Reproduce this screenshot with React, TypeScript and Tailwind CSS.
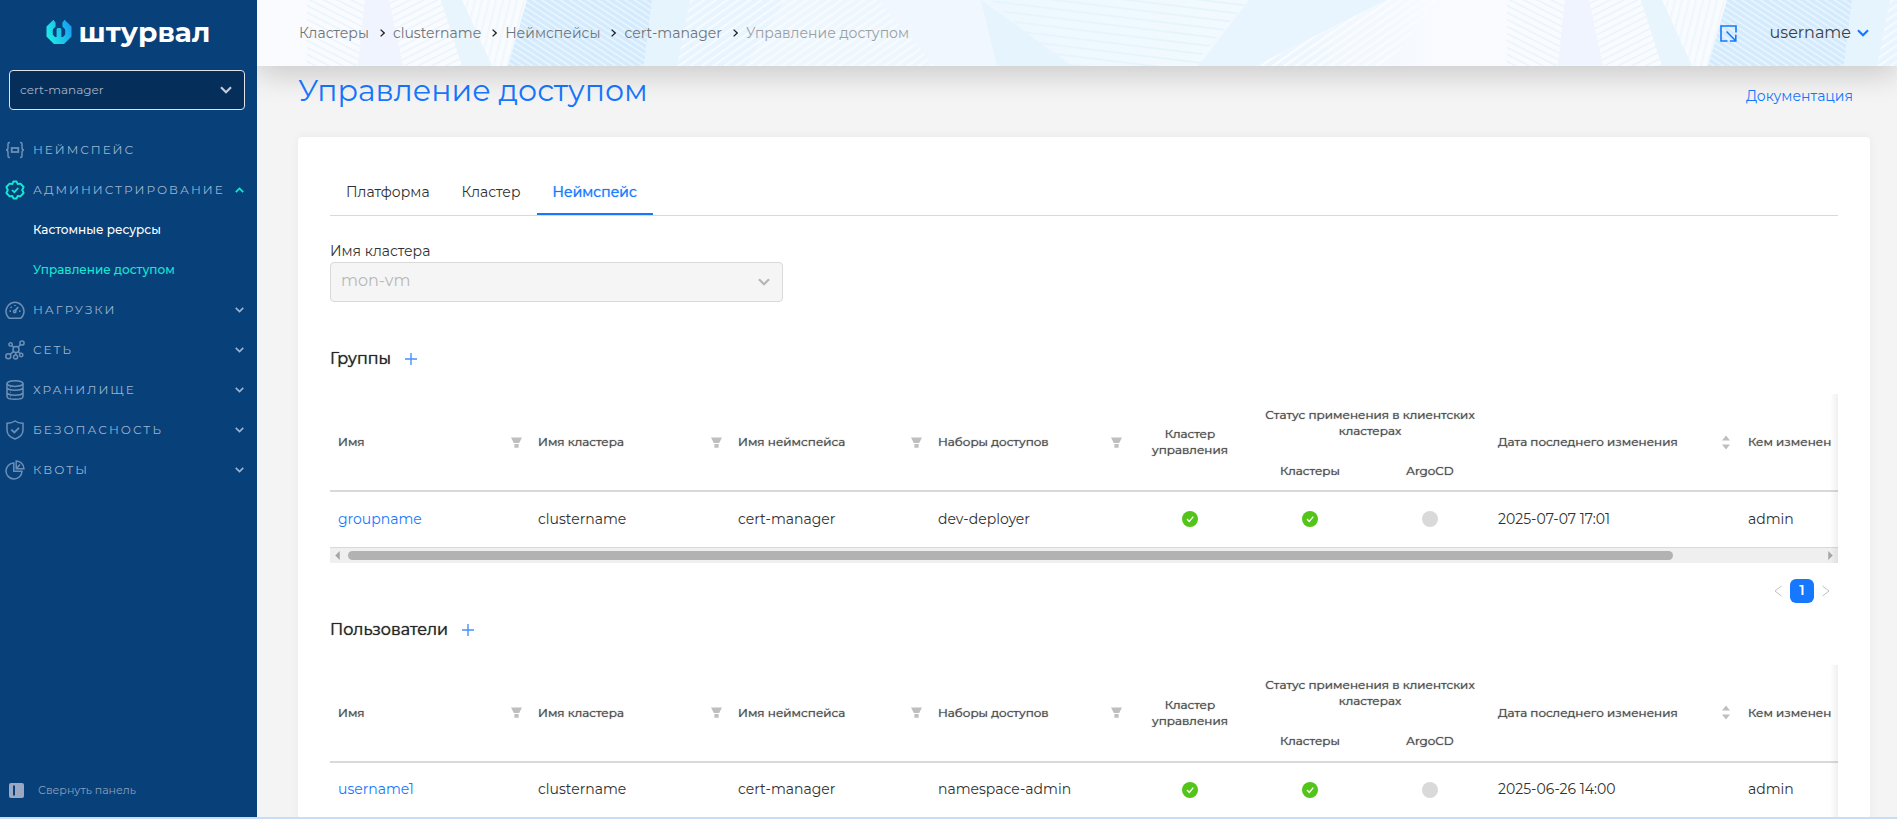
import { useState } from "react"
import type { ReactNode } from "react"

const Chevron = ({ className }: { className?: string }) => (
  <svg viewBox="0 0 12 8" className={className} fill="none" stroke="currentColor" strokeWidth="2.2" aria-hidden="true">
    <path d="M1 1.2 L6 6.2 L11 1.2" />
  </svg>
)

const icons: Record<string, ReactNode> = {
  namespace: (
    <>
      <path d="M5 2.5 H4.5 Q3 2.5 3 4 V7.5 Q3 10 1 10 Q3 10 3 12.5 V16 Q3 17.5 4.5 17.5 H5 M15 2.5 H15.5 Q17 2.5 17 4 V7.5 Q17 10 19 10 Q17 10 17 12.5 V16 Q17 17.5 15.5 17.5 H15" />
      <rect x="6.7" y="8" width="6.6" height="4" strokeWidth="1.8" />
    </>
  ),
  admin: (
    <>
      <path
        d="M8.4 1.5 H11.6 L12.6 4 L15.4 3.6 L18.6 7 L17.2 10 L18.6 13 L15.4 16.4 L12.6 16 L11.6 18.5 H8.4 L7.4 16 L4.6 16.4 L1.4 13 L2.8 10 L1.4 7 L4.6 3.6 L7.4 4 Z"
        strokeWidth="1.9"
        strokeLinejoin="round"
      />
      <path d="M7 10 L9.3 12.2 L13.3 8" strokeWidth="1.7" />
    </>
  ),
  workloads: (
    <>
      <path d="M4.3 18.3 A9 9 0 1 1 15.7 18.3 Z" />
      <path d="M4.5 11.2 H6 M14 11.2 H15.5 M10 5 V6 M5.6 7 L6.6 7.9 M13.2 7 L10.4 10.4" strokeWidth="1.7" />
      <circle cx="9.7" cy="11.5" r="1.2" />
    </>
  ),
  network: (
    <>
      <circle cx="11" cy="9.4" r="3" />
      <circle cx="17" cy="3" r="2.1" />
      <circle cx="5.6" cy="4.4" r="1.7" />
      <circle cx="3.3" cy="16.3" r="2.5" />
      <circle cx="10.6" cy="17" r="2" />
      <circle cx="16.2" cy="15" r="1.7" />
      <path d="M13 7.2 L15.5 4.5 M8.8 7.3 L6.8 5.6 M8.7 11.4 L5.1 14.4 M10.9 12.4 L10.7 15 M13.2 11.6 L15.1 13.6" />
    </>
  ),
  storage: (
    <>
      <ellipse cx="10" cy="3.6" rx="8" ry="2.8" />
      <path d="M2 3.6 V16.4 Q2 19.2 10 19.2 Q18 19.2 18 16.4 V3.6 M2 8 Q3.6 10.2 10 10.2 Q16.4 10.2 18 8 M2 13 Q3.6 15.2 10 15.2 Q16.4 15.2 18 13" />
      <path d="M5 7.4 h.6 M5 12.4 h.6 M5 16.6 h.6" strokeWidth="1.8" />
    </>
  ),
  security: (
    <>
      <path d="M10 1 Q13.5 3.4 18 3.2 V10 Q18 16.2 10 19 Q2 16.2 2 10 V3.2 Q6.5 3.4 10 1 Z" />
      <path d="M6.3 9.6 L9.3 12.5 L14 7.8" strokeWidth="1.8" />
    </>
  ),
  quotas: (
    <>
      <path d="M8.8 3 A8 8 0 1 0 17 11.2 H8.8 Z" />
      <path d="M11.2 1 A8 8 0 0 1 19 8.8 H11.2 Z M11.2 8.8 L15 4.5" />
    </>
  ),
}

type MenuItem = { id: string; label: string; expandable?: boolean; children?: { label: string; active?: boolean }[] }

const menu: MenuItem[] = [
  { id: "namespace", label: "НЕЙМСПЕЙС" },
  {
    id: "admin",
    label: "АДМИНИСТРИРОВАНИЕ",
    expandable: true,
    children: [{ label: "Кастомные ресурсы" }, { label: "Управление доступом", active: true }],
  },
  { id: "workloads", label: "НАГРУЗКИ", expandable: true },
  { id: "network", label: "СЕТЬ", expandable: true },
  { id: "storage", label: "ХРАНИЛИЩЕ", expandable: true },
  { id: "security", label: "БЕЗОПАСНОСТЬ", expandable: true },
  { id: "quotas", label: "КВОТЫ", expandable: true },
]

const Sidebar = () => {
  const [open, setOpen] = useState("admin")

  return (
    <aside className="relative z-20 w-[257px] shrink-0 bg-[#084079] flex flex-col">
      <div className="flex items-center justify-center gap-[7px] pt-4 pr-px h-[48px]">
        <svg viewBox="0 0 26 26" className="w-[26px] h-[26px]" aria-hidden="true">
          <defs>
            <linearGradient id="logo" x1="0" y1="0.7" x2="1" y2="0.3">
              <stop offset="0" stopColor="#1df0e4" />
              <stop offset="1" stopColor="#1a9cf0" />
            </linearGradient>
          </defs>
          <path
            d="M7.5 0.8 L9.6 3.8 V7.6 L6.8 10.4 V15.6 L9 17.9 H10.6 V10 L11.6 9 H14.4 L15.4 10 V17.9 H17 L19.2 15.6 V10.4 L16.4 7.6 V3.8 L18.5 0.8 L25.5 7.6 V17.6 L18 25 H8 L0.5 17.6 V7.6 Z"
            fill="url(#logo)"
          />
        </svg>
        <span className="text-[28px] leading-8 font-bold text-white">штурвал</span>
      </div>

      <div className="pl-[9px] pr-3 pt-[22px]">
        <div className="relative text-[#c3ccd8]">
          <select
            aria-label="Неймспейс"
            className="w-full h-10 appearance-none rounded-[4px] border border-[#dfe3e8] bg-[#062e5b] pl-[10px] pr-8 text-[12px] text-[#a3b4c8]"
          >
            <option>cert-manager</option>
          </select>
          <Chevron className="absolute right-[13px] top-4 w-3 h-2 pointer-events-none" />
        </div>
      </div>

      <nav className="pt-5 flex-1">
        {menu.map((item) => (
          <div key={item.id}>
            <button
              onClick={() => setOpen(open === item.id ? "" : item.id)}
              className="w-full h-10 pl-[5px] pr-[13px] flex items-center text-left text-[12px] tracking-[2px] text-[#9cb4cf]"
            >
              <svg
                viewBox="0 0 20 20"
                className={`w-5 h-5 mr-2 shrink-0 ${item.children ? "text-[#17e8d4]" : "text-[#6d8fb5]"}`}
                fill="none"
                stroke="currentColor"
                strokeWidth="1.5"
                aria-hidden="true"
              >
                {icons[item.id]}
              </svg>
              <span className="flex-1 whitespace-nowrap">{item.label}</span>
              {item.expandable && (
                <Chevron className={open === item.id ? "w-[9px] h-[6px] rotate-180 text-[#17e8d4]" : "w-[9px] h-[6px]"} />
              )}
            </button>
            {open === item.id &&
              item.children?.map((child) => (
                <a
                  key={child.label}
                  href="#"
                  className={`h-10 pl-[33px] flex items-center text-[12px] font-medium ${
                    child.active ? "text-[#17e8d4]" : "text-white"
                  }`}
                >
                  {child.label}
                </a>
              ))}
          </div>
        ))}
      </nav>

      <button className="flex items-center gap-[14px] h-[54px] pl-[9px] text-[11px] text-[#8b9fbc]">
        <svg viewBox="0 0 15 15" className="w-[15px] h-[15px]" aria-hidden="true">
          <rect width="15" height="15" rx="2" fill="#9aa8c3" />
          <path d="M5 2.5 V12.5" stroke="#084079" strokeWidth="2" />
        </svg>
        Свернуть панель
      </button>
    </aside>
  )
}

// decorative facade pattern, tiled every 1200px
const HeaderPattern = () => (
  <svg className="absolute inset-0 w-full h-full" aria-hidden="true">
    <defs>
      <pattern id="down" width="12" height="7" patternUnits="userSpaceOnUse" patternTransform="skewY(27)">
        <path d="M0 1 H12" stroke="#ebf6fc" strokeWidth="2" />
      </pattern>
      <pattern id="up" width="12" height="7" patternUnits="userSpaceOnUse" patternTransform="skewY(-27)">
        <path d="M0 1 H12" stroke="#ebf6fc" strokeWidth="2" />
      </pattern>
      <pattern id="blue" width="12" height="6" patternUnits="userSpaceOnUse" patternTransform="skewY(33)">
        <path d="M0 1 H12" stroke="#e8f5fe" strokeWidth="2" />
      </pattern>
      <pattern id="steep" width="7" height="12" patternUnits="userSpaceOnUse" patternTransform="skewX(-14)">
        <path d="M1 0 V12" stroke="#eff8fc" strokeWidth="3" />
      </pattern>
      <pattern id="white" width="12" height="8" patternUnits="userSpaceOnUse" patternTransform="skewY(-35)">
        <path d="M0 1 H12" stroke="#fafdff" strokeWidth="3" />
      </pattern>
      <pattern id="flat" width="12" height="9" patternUnits="userSpaceOnUse" patternTransform="skewY(7)">
        <path d="M0 1 H12" stroke="#e6f5fc" strokeWidth="2" />
      </pattern>
      <linearGradient id="glass" x1="0" x2="1">
        <stop offset="0" stopColor="#edf7fe" />
        <stop offset="1" stopColor="#f2faff" />
      </linearGradient>
      <linearGradient id="haze" x1="0" x2="1">
        <stop offset="0" stopColor="#eaf5fd" />
        <stop offset="1" stopColor="#fafbff" />
      </linearGradient>
      <pattern id="facade" width="1200" height="66" patternUnits="userSpaceOnUse">
        <rect width="1200" height="66" fill="#fafbff" />
        <path d="M50 0 H108 L102 66 H50 Z" fill="url(#down)" />
        <path d="M108 0 H132 L146 66 H101 Z" fill="#eff4fe" />
        <path d="M132 0 H184 L205 66 H146 Z" fill="url(#up)" />
        <path d="M184 0 H205 L235 66 H205 Z" fill="#e8f5fd" />
        <path d="M205 0 H270 L251 66 H235 Z" fill="url(#steep)" />
        <path d="M270 0 H395 L387 66 H251 Z" fill="#d4eafd" />
        <path d="M270 0 H395 L387 66 H251 Z" fill="url(#blue)" />
        <path d="M395 0 H433 L420 66 H387 Z" fill="#e5f4fd" />
        <path d="M433 0 H528 L489 66 H420 Z" fill="#e8f4fe" />
        <path d="M528 0 H622 L678 66 H489 Z" fill="#eef6fe" />
        <path d="M433 0 H622 L678 66 H420 Z" fill="url(#white)" opacity="0.8" />
        <path d="M622 0 H724 L740 66 H678 Z" fill="#f0f7fe" />
        <path d="M724 0 H992 L941 66 H740 Z" fill="url(#glass)" />
        <path d="M735 0 H992 L945 55 V66 H800 Z" fill="url(#flat)" />
        <path d="M724 0 L740 66 H815 Z" fill="#e6f4fd" />
        <path d="M992 0 H1130 L998 66 H941 Z" fill="#e8f4fe" />
        <path d="M1130 0 H1200 V66 H998 Z" fill="url(#haze)" />
        <path d="M1130 0 H1180 L1130 66 H998 Z" fill="url(#white)" />
      </pattern>
    </defs>
    <rect width="100%" height="100%" fill="url(#facade)" />
  </svg>
)

const crumbs = ["Кластеры", "clustername", "Неймспейсы", "cert-manager"]

const Header = () => (
  <header className="relative z-10 h-[66px] shrink-0 shadow-[0_8px_30px_rgba(0,0,0,0.18)]">
    <HeaderPattern />
    <div className="relative h-full pl-[42px] pr-7 flex items-center justify-between">
      <nav className="flex items-center text-[14px] text-[#6f7478]">
        {crumbs.map((crumb) => (
          <span key={crumb} className="flex items-center">
            <a href="#">{crumb}</a>
            <svg viewBox="0 0 5 8" className="w-[5px] h-2 ml-[11px] mr-2" fill="none" stroke="#222" strokeWidth="1.3" aria-hidden="true">
              <path d="M0.6 0.6 L4.2 4 L0.6 7.4" />
            </svg>
          </span>
        ))}
        <span className="text-[#9b9ea1]">Управление доступом</span>
      </nav>
      <div className="flex items-center gap-[33px]">
        <button aria-label="Развернуть">
          <svg viewBox="0 0 17 17" className="w-[17px] h-[17px]" fill="none" stroke="#1677ff" strokeWidth="1.6" aria-hidden="true">
            <path d="M16 7.5 V1 H1 V16 H7.5 M6.5 6.5 L15.5 15.5 M15.8 9.8 V16 H9.8" />
          </svg>
        </button>
        <button className="flex items-center gap-[6px] text-[16px] text-[#3c4043]">
          username
          <Chevron className="w-3 h-2 text-[#1677ff]" />
        </button>
      </div>
    </div>
  </header>
)

const FilterIcon = () => (
  <svg viewBox="0 0 11 11" className="w-[11px] h-[11px] shrink-0" fill="#bfbfbf" aria-hidden="true">
    <path d="M0 0.5 H11 L8.2 6 H2.8 Z M3.4 7 H7.6 V10.8 H3.4 Z" />
  </svg>
)

const SortIcon = () => (
  <svg viewBox="0 0 8 15" className="w-2 h-[15px] shrink-0" fill="#bfbfbf" aria-hidden="true">
    <path d="M4 0.5 L8 5.5 H0 Z M4 14.5 L8 9.5 H0 Z" />
  </svg>
)

const StatusIcon = ({ ok }: { ok: boolean }) => (
  <svg viewBox="0 0 16 16" className="w-4 h-4 mx-auto" role="img" aria-label={ok ? "Применено" : "Нет данных"}>
    <circle cx="8" cy="8" r="8" fill={ok ? "#52c41a" : "#d9d9d9"} />
    {ok && <path d="M5 8 L7.3 10.4 L11.3 5.6" fill="none" stroke="#fff" strokeWidth="1.4" />}
  </svg>
)

type Row = { name: string; access: string; changed: string }

const AccessTable = ({ title, row }: { title: string; row: Row }) => (
  <section className="mb-[15px]">
    <div className="flex items-center gap-[14px] h-6">
      <h2 className="text-[16px] font-normal [text-shadow:0_0_1px_currentColor] text-[#262626]">{title}</h2>
      <button aria-label={`Добавить: ${title}`}>
        <svg viewBox="0 0 12 12" className="w-3 h-3" stroke="#4591ff" strokeWidth="1.4" aria-hidden="true">
          <path d="M6 0 V12 M0 6 H12" />
        </svg>
      </button>
    </div>

    <div className="relative mt-[23px]">
      <div className="overflow-hidden">
        <table className="w-[1672px] table-fixed border-collapse text-[14px] text-[#303030]">
          <colgroup>
            <col className="w-[200px]" />
            <col className="w-[200px]" />
            <col className="w-[200px]" />
            <col className="w-[200px]" />
            <col className="w-[120px]" />
            <col className="w-[120px]" />
            <col className="w-[120px]" />
            <col className="w-[250px]" />
            <col className="w-[200px]" />
            <col />
          </colgroup>
          <thead className="text-[12px] leading-4 text-[#4d4d4d] [text-shadow:0_0_1px_currentColor] border-b-2 border-[#d9d9d9]">
            <tr className="h-[57px]">
              {["Имя", "Имя кластера", "Имя неймспейса", "Наборы доступов"].map((label) => (
                <th key={label} rowSpan={2} className="px-2 font-normal">
                  <div className="flex items-center justify-between">
                    {label}
                    <FilterIcon />
                  </div>
                </th>
              ))}
              <th rowSpan={2} className="px-2 font-normal">Кластер управления</th>
              <th colSpan={2} className="px-2 font-normal">
                Статус применения в клиентских кластерах
              </th>
              <th rowSpan={2} className="pl-2 pr-[10px] font-normal">
                <div className="flex items-center justify-between">
                  Дата последнего изменения
                  <SortIcon />
                </div>
              </th>
              <th rowSpan={2} className="px-2 font-normal text-left">Кем изменен</th>
              <th rowSpan={2} />
            </tr>
            <tr className="h-10">
              <th className="font-normal">Кластеры</th>
              <th className="font-normal">ArgoCD</th>
            </tr>
          </thead>
          <tbody>
            <tr className="h-14 border-b border-[#d9d9d9]">
              <td className="px-2">
                <a href="#" className="text-[#1677ff]">{row.name}</a>
              </td>
              <td className="px-2">clustername</td>
              <td className="px-2">cert-manager</td>
              <td className="px-2">{row.access}</td>
              <td><StatusIcon ok /></td>
              <td><StatusIcon ok /></td>
              <td><StatusIcon ok={false} /></td>
              <td className="px-2">{row.changed}</td>
              <td className="px-2">admin</td>
              <td />
            </tr>
          </tbody>
        </table>
      </div>
      <div className="flex items-center gap-2 h-[15px] px-[5px] bg-[#efefef]" aria-hidden="true">
        <svg viewBox="0 0 5 10" className="w-[5px] h-[9px]" fill="#a6a6a6">
          <path d="M5 0 V10 L0 5 Z" />
        </svg>
        <div className="flex-1">
          <div className="w-[90%] h-[9px] rounded-full bg-[#b2b2b2]" />
        </div>
        <svg viewBox="0 0 5 10" className="w-[5px] h-[9px]" fill="#a6a6a6">
          <path d="M0 0 V10 L5 5 Z" />
        </svg>
      </div>
      <div className="absolute inset-y-0 right-0 w-2 bg-gradient-to-l from-black/6 to-transparent pointer-events-none" />
    </div>

    <div className="flex items-center justify-end gap-2 pt-4 pr-2 text-[#bfbfbf]">
      <button disabled aria-label="Назад">
        <svg viewBox="0 0 8 12" className="w-2 h-3" fill="none" stroke="currentColor" aria-hidden="true">
          <path d="M7.5 1 L1 6 L7.5 11" />
        </svg>
      </button>
      <button className="w-6 h-6 rounded-[6px] bg-[#1677ff] text-white text-[14px] font-semibold">1</button>
      <button disabled aria-label="Вперёд">
        <svg viewBox="0 0 8 12" className="w-2 h-3" fill="none" stroke="currentColor" aria-hidden="true">
          <path d="M0.5 1 L7 6 L0.5 11" />
        </svg>
      </button>
    </div>
  </section>
)

export default function App() {
  const [tab, setTab] = useState("Неймспейс")

  return (
    <div className="h-screen flex overflow-hidden border-b-2 border-[#c9ddf7] bg-[#f4f4f4] font-[Montserrat,Inter,sans-serif]">
      <Sidebar />
      <div className="flex-1 min-w-0 flex flex-col">
        <Header />
        <main className="flex-1 min-h-0 overflow-hidden pl-[41px] pr-[27px]">
          <div className="flex items-center justify-between h-[71px] pb-[22px] pr-[17px]">
            <h1 className="text-[30px] leading-9 font-normal text-[#1677ff]">Управление доступом</h1>
            <a href="#" className="pt-3 text-[14px] text-[#1677ff]">Документация</a>
          </div>

          <div className="bg-white rounded-t-[4px] px-8 pt-8 shadow-[0_0_10px_rgba(0,0,0,0.05)]">
            <div role="tablist" className="flex h-[47px] border-b border-[#d9d9d9]">
              {["Платформа", "Кластер", "Неймспейс"].map((name) => (
                <button
                  key={name}
                  role="tab"
                  aria-selected={tab === name}
                  onClick={() => setTab(name)}
                  className={`px-4 pt-[2px] text-[14px] border-b-2 ${
                    tab === name
                      ? "border-[#1677ff] [text-shadow:0_0_1px_currentColor] text-[#1677ff]"
                      : "border-transparent text-[#303030]"
                  }`}
                >
                  {name}
                </button>
              ))}
            </div>

            <div className="w-[453px] pt-6">
              <label htmlFor="cluster" className="block text-[14px] leading-[22px] text-[#303030]">Имя кластера</label>
              <div className="relative text-[#b5b5b5]">
                <select
                  id="cluster"
                  disabled
                  className="block w-full h-10 appearance-none rounded-[4px] border border-[#d9d9d9] bg-[#f5f5f5] pl-[10px] pb-[2px] text-[16px] text-[#b8b8b8] opacity-100"
                >
                  <option>mon-vm</option>
                </select>
                <Chevron className="absolute right-[13px] top-4 w-3 h-2 pointer-events-none" />
              </div>
            </div>

            <div className="pt-[45px]">
              <AccessTable title="Группы" row={{ name: "groupname", access: "dev-deployer", changed: "2025-07-07 17:01" }} />
              <AccessTable title="Пользователи" row={{ name: "username1", access: "namespace-admin", changed: "2025-06-26 14:00" }} />
            </div>
          </div>
        </main>
      </div>
    </div>
  )
}
